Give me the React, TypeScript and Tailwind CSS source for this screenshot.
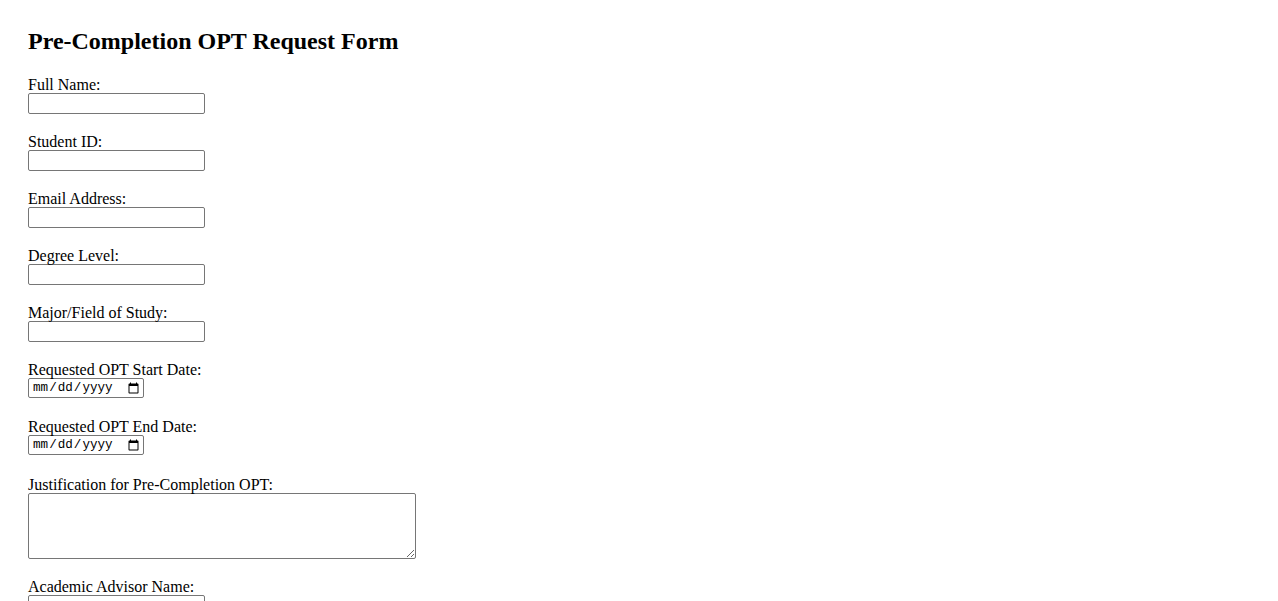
const textFields = ["Full Name:", "Student ID:", "Email Address:", "Degree Level:", "Major/Field of Study:"]

const labelClass = "block pt-[4px] text-[16px] leading-[17px]"

const inputClass =
  "block w-[177px] h-[21px] px-[2px] py-[1px] border border-[#767676] rounded-[2px] bg-white text-[13.33px] font-['Liberation_Sans',Arial,sans-serif] text-black"

const dateClass =
  "block w-[116px] h-[20px] pl-[3px] pr-[1px] border border-[#767676] rounded-[2px] bg-white text-[12.6px] font-['Liberation_Mono',monospace] text-black"

export default function App() {
  return (
    <div className="min-h-screen bg-white px-[28px] pt-[28px] pb-8 font-['Liberation_Serif','Times_New_Roman',serif] text-black">
      <h2 className="text-[24px] font-bold leading-[27.6px] mb-[16.5px]">Pre-Completion OPT Request Form</h2>

      <form>
        {textFields.map((label) => (
          <div key={label} className="mb-[15px]">
            <label className={labelClass}>{label}</label>
            <input type="text" className={inputClass} />
          </div>
        ))}

        {/* dates */}
        <div className="mb-[16px]">
          <label className={labelClass}>Requested OPT Start Date:</label>
          <input type="date" className={dateClass} />
        </div>
        <div className="mb-[17px]">
          <label className={labelClass}>Requested OPT End Date:</label>
          <input type="date" className={dateClass} />
        </div>

        <div className="mb-[15px]">
          <label className={labelClass}>Justification for Pre-Completion OPT:</label>
          <textarea className="block w-[388px] h-[66px] p-[2px] border border-[#767676] rounded-[2px] bg-white text-[13.33px] font-['Liberation_Mono',monospace]" />
        </div>

        <div className="mb-[15px]">
          <label className={labelClass}>Academic Advisor Name:</label>
          <input type="text" className={inputClass} />
        </div>
        <div className="mb-[15px]">
          <label className={labelClass}>Academic Advisor Email:</label>
          <input type="email" className={inputClass} />
        </div>

        <button type="submit" className="px-[6px] py-[1px] border border-[#767676] rounded-[2px] bg-[#efefef] text-[13.33px] font-['Liberation_Sans',Arial,sans-serif]">
          Submit Request
        </button>
      </form>
    </div>
  )
}
